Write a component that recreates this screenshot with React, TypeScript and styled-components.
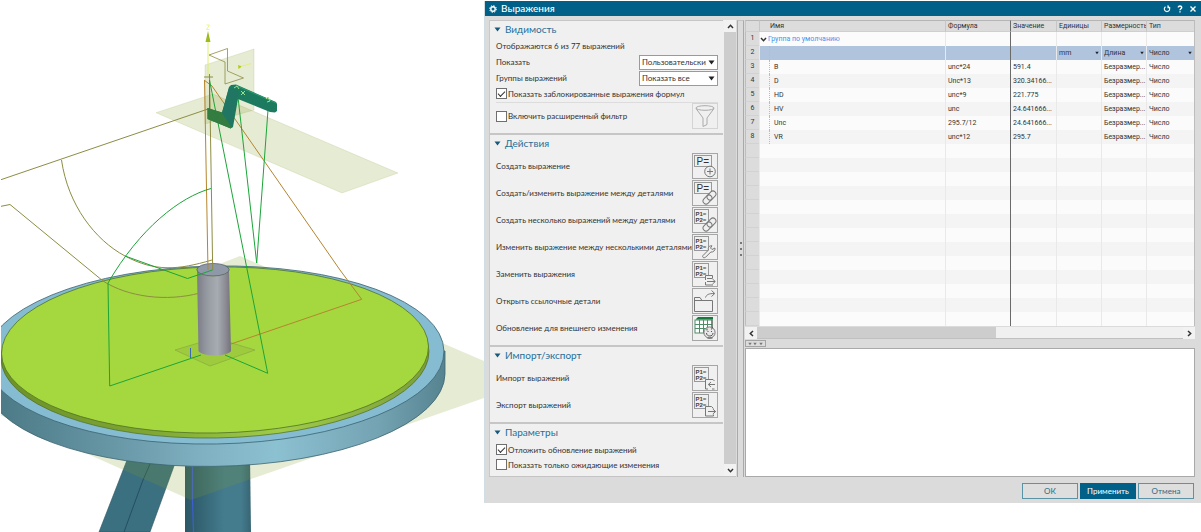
import React from "react";
import styled, { createGlobalStyle, css } from "styled-components";

const uiFont = `Lato, "Noto Sans", sans-serif`;
const tableFont = `Roboto, "Noto Sans", sans-serif`;

const GlobalStyle = createGlobalStyle`
  *, *::before, *::after { box-sizing: border-box; }
  body { margin: 0; background: #fff; font-family: ${uiFont}; font-size: 8px; color: #333; }
  button, input, select, textarea { font: inherit; color: inherit; margin: 0; border-radius: 0; }
`;

const Page = styled.main`
  display: grid;
  grid-template-columns: minmax(0, 484fr) minmax(0, 717fr);
  align-items: start;
`;

const SceneSvg = styled.svg`
  display: block;
  width: 100%;
  height: auto;
`;

const Dialog = styled.section`
  margin-top: 1px;
  background: #dbdbdb;
  border-left: 1px solid #d0dde2;
`;

const TitleBar = styled.header`
  display: flex;
  align-items: center;
  height: 15px;
  padding: 0 4px;
  gap: 4px;
  background: #006087;
  color: #fff;
`;

const Title = styled.h1`
  flex: 1;
  margin: 0;
  font-size: 10px;
  line-height: 15px;
  font-weight: 500;
`;

const TitleButton = styled.button`
  width: 9px;
  height: 9px;
  padding: 0;
  border: 0;
  background: none;
  display: grid;
  place-items: center;
`;

const TitleActions = styled.div`
  display: flex;
  gap: 4px;
`;

const Body = styled.div`
  display: grid;
  grid-template-columns: 247px 9px minmax(0, 1fr);
  padding: 4px 6px 0 4px;
`;

const Side = styled.div`
  display: flex;
  min-width: 0;
  border-bottom: 1px solid #c4c4c4;
`;

const Sections = styled.div`
  flex: 1;
  min-width: 0;
  border-left: 1px solid #c9c9c9;
  background: #f0f0f0;
`;

const Section = styled.section`
  padding: 0 5px 4px 6px;
  border-top: 1px solid #c6c6c6;
  & + & { border-top-width: 2px; }
`;

const SectionTitle = styled.h2`
  display: flex;
  align-items: center;
  gap: 4px;
  height: 16px;
  margin: 0 0 2px -2px;
  font-size: 10px;
  line-height: 16px;
  font-weight: 400;
  color: #1f6f97;
`;

const Note = styled.p`
  margin: 0;
  height: 15px;
  line-height: 15px;
`;

const Field = styled.div`
  display: flex;
  align-items: center;
  justify-content: space-between;
  height: 16px;
`;

const SelectBox = styled.div`
  display: grid;
  width: 79px;
  height: 15px;
  align-items: center;
  border: 1px solid #9a9a9a;
  background: #fff;
  & > * { grid-area: 1 / 1; }
  & > svg { justify-self: end; margin-right: 2px; pointer-events: none; }
`;

const Select = styled.select`
  appearance: none;
  width: 100%;
  height: 13px;
  padding: 0 2px;
  border: 0;
  background: transparent;
  line-height: 13px;
`;

const CheckLabel = styled.label`
  display: flex;
  align-items: center;
  gap: 1px;
  height: 15px;
  white-space: nowrap;
`;

const Tick = styled.input`
  appearance: none;
  display: grid;
  place-items: center;
  width: 11px;
  height: 11px;
  border: 1px solid #6f6f6f;
  background: #fff;
  &:checked::after {
    content: "";
    width: 7px;
    height: 4px;
    margin-top: -2px;
    border-left: 1px solid #333;
    border-bottom: 1px solid #333;
    transform: rotate(-45deg);
  }
`;

const FilterRow = styled.div`
  display: flex;
  align-items: center;
  justify-content: space-between;
  margin-top: 1px;
  border-top: 1px solid #dcdcdc;
`;

const ActionList = styled.div`
  display: grid;
  grid-template-columns: minmax(0, 1fr);
  gap: 1px;
`;

const Action = styled.div`
  display: flex;
  align-items: center;
  justify-content: space-between;
  white-space: nowrap;
  & > span { min-width: 0; }
`;

const IconButton = styled.button<{ $dim?: boolean }>`
  width: 26px;
  height: 26px;
  flex: none;
  padding: 0;
  border: 1px solid ${(p) => (p.$dim ? "#d4d4d4" : "#a6a6a6")};
  background: #f0f0f0;
  svg { display: block; }
`;

const VScroll = styled.div`
  display: flex;
  flex-direction: column;
  flex: none;
  width: 13px;
  background: #f0f0f0;
  padding-left: 1px;
`;

const ScrollButton = styled.button`
  width: 12px;
  height: 12px;
  flex: none;
  padding: 0;
  border: 0;
  background: #f2f2f2;
  display: grid;
  place-items: center;
`;

const VThumb = styled.div`
  flex: 1;
  background: #cdcdcd;
`;

const Splitter = styled.div`
  display: flex;
  flex-direction: column;
  align-items: center;
  justify-content: center;
  gap: 4px;
  margin: 0 1px;
  border: 1px solid #a9a9a9;
  border-bottom: 0;
  border-top-color: #c4c4c4;
`;

const Dot = styled.i`
  width: 2px;
  height: 2px;
  background: #777;
`;

const Main = styled.div`
  display: flex;
  flex-direction: column;
  min-width: 0;
`;

const Grid = styled.table`
  width: 100%;
  table-layout: fixed;
  border-collapse: separate;
  border-spacing: 0;
  background: #fcfcfc;
  font-family: ${tableFont};
  font-size: 7px;
  line-height: 15px;
  border-right: 1px solid #bdbdbd;
`;

const cell = css`
  height: 14px;
  padding: 0 0 0 2px;
  overflow: hidden;
  white-space: nowrap;
  text-align: left;
  font-weight: 400;
`;

const HeadCell = styled.th<{ $mark?: boolean; $first?: boolean }>`
  ${cell}
  height: 12px;
  line-height: 10px;
  background: #dcdcdc;
  border-top: 1px solid #b5b5b5;
  border-bottom: 1px solid #cfcfcf;
  border-left: 1px solid ${(p) => (p.$mark ? "#6a6a6a" : "#c6c6c6")};
  ${(p) => p.$first && "padding-left: 10px;"}
`;

const NumCell = styled.th`
  ${cell}
  padding: 0;
  line-height: 13px;
  text-align: center;
  background: #dcdcdc;
  border-bottom: 1px solid #d2d2d2;
  border-left: 1px solid #bdbdbd;
`;

const Cell = styled.td<{ $mark?: boolean }>`
  ${cell}
  line-height: 14px;
  border-left: 1px solid ${(p) => (p.$mark ? "#6a6a6a" : "#e9e9e9")};
`;

const NameCell = styled(Cell)<{ $indent: boolean }>`
  padding: 0 0 0 ${(p) => (p.$indent ? 9 : 0)}px;
`;

const Branch = styled.span`
  display: block;
  height: 14px;
  padding-left: 4px;
  border-left: 1px dotted #bbb;
`;

const GroupName = styled.span`
  display: flex;
  align-items: center;
  gap: 1px;
  color: #3f97ea;
`;

const Row = styled.tr<{ $tone: "plain" | "alt" | "active" }>`
  background: ${(p) => ({ plain: "#fbfbfb", alt: "#f4f4f4", active: "#b0c4de" })[p.$tone]};
`;

const CellSelect = styled.div`
  display: grid;
  align-items: center;
  & > * { grid-area: 1 / 1; }
  & > select { padding: 0; }
  & > svg { justify-self: end; margin-right: 2px; pointer-events: none; }
`;

const HScroll = styled.div`
  display: flex;
  height: 12px;
  margin-top: 1px;
  background: #f0f0f0;
  border-bottom: 1px solid #c0c0c0;
`;

const HTrack = styled.div`
  flex: 1;
`;

const HThumb = styled.div`
  width: 56%;
  height: 100%;
  background: #cdcdcd;
`;

const CollapseButton = styled.button`
  display: flex;
  align-items: center;
  justify-content: space-around;
  width: 21px;
  height: 7px;
  margin: 1px 0;
  padding: 0 1px;
  border: 1px solid #a3a3a3;
  background: #dcdcdc;
`;

const Comment = styled.textarea`
  flex: 1;
  display: block;
  width: 100%;
  padding: 2px;
  border: 1px solid #a9a9a9;
  background: #fff;
  resize: none;
  outline: none;
`;

const Footer = styled.footer`
  display: flex;
  justify-content: flex-end;
  gap: 2px;
  padding: 6px 7px 4px;
`;

const FootButton = styled.button<{ $primary?: boolean }>`
  width: 56px;
  height: 16px;
  padding: 0;
  border: 1px solid ${(p) => (p.$primary ? "#006087" : "#5b93a6")};
  background: ${(p) => (p.$primary ? "#006087" : "#dedede")};
  color: ${(p) => (p.$primary ? "#fff" : "#2a6a84")};
  line-height: 14px;
`;

const DownArrow = ({ size = 7, color = "#222" }: { size?: number; color?: string }) => (
  <svg width={size} height={size} viewBox="0 0 7 7" aria-hidden="true">
    <path d="M0.5 1.5h6L3.5 5.5z" fill={color} />
  </svg>
);

const Chevron = ({ turn }: { turn: number }) => (
  <svg width="7" height="7" viewBox="0 0 7 7" aria-hidden="true">
    <path d="M1 5L3.5 2.3L6 5" fill="none" stroke="#333" strokeWidth="1.5" transform={`rotate(${turn} 3.5 3.5)`} />
  </svg>
);

type IconName = "create" | "link" | "multiLink" | "wrench" | "replace" | "folder" | "refresh" | "import" | "export" | "filter";

const SinglePlate = () => (
  <g>
    <rect x="1.5" y="1.5" width="17" height="11" fill="#f0f0f0" stroke="#999" />
    <text x="3.5" y="10.5" fontSize="10" fontFamily="Liberation Sans" fill="#333">P=</text>
  </g>
);

const DoublePlate = () => (
  <g>
    <rect x="1.5" y="1.5" width="14" height="14" fill="#f0f0f0" stroke="#999" />
    <text x="2.5" y="7.5" fontSize="6" fontWeight="700" fontFamily="Liberation Sans" fill="#444">P1=</text>
    <text x="2.5" y="13.5" fontSize="6" fontWeight="700" fontFamily="Liberation Sans" fill="#444">P2=</text>
  </g>
);

const Links = () => (
  <g fill="none" stroke="#777" strokeWidth="1">
    <rect x="-5" y="-3" width="10" height="6" rx="3" fill="#f0f0f0" transform="translate(18.500 14.500) rotate(-45)" />
    <rect x="-5" y="-3" width="10" height="6" rx="3" transform="translate(14.500 18.500) rotate(-45)" />
  </g>
);

const line = { fill: "#f0f0f0", stroke: "#777", strokeWidth: 1 };

const glyphs: Record<IconName, React.ReactNode> = {
  create: (
    <>
      <SinglePlate />
      <circle cx="17" cy="17.500" r="5.300" {...line} />
      <path d="M14 17.500h6M17 14.500v6" {...line} />
    </>
  ),
  link: (<><SinglePlate /><Links /></>),
  multiLink: (<><DoublePlate /><Links /></>),
  wrench: (
    <>
      <DoublePlate />
      <path d="M10 20.500L15.500 15C14.500 12.500 16.500 10.500 19 10.800L17.500 13L19 14.500L22 13C22.500 15.500 20 17.500 17.800 17L12.500 22.300C10.500 23.500 8.800 22 10 20.500Z" {...line} />
    </>
  ),
  replace: (
    <>
      <DoublePlate />
      <path d="M19.500 16V13.500H12.500V18M12.500 20V23H20M14 16.500H19.500M14 19.500H22M19.500 17L22.300 19.500L19.500 22" {...line} />
    </>
  ),
  folder: (
    <>
      <path d="M1.500 22.500V8.500H7L9 11.500H19.500V22.500Z" {...line} />
      <path d="M1.500 11.500H9M12.500 8.500C13.500 5.500 16 4.500 21 4.500M18.500 1.500L21.800 4.500L18.500 7.500" {...line} fill="none" />
    </>
  ),
  refresh: (
    <>
      <rect x="2" y="4" width="17" height="13" fill="#fff" stroke="#4f8c68" />
      <path d="M2 8.500h17M2 12.500h17M6.500 4v13M10.500 4v13M14.500 4v13" stroke="#4f8c68" />
      <path d="M3 3L5 1H20V3.500H3Z" fill="#167a3f" />
      <path d="M19 3.500V14" stroke="#555" />
      <circle cx="16.500" cy="16.500" r="5.600" {...line} fill="#e8e8e8" />
      <path d="M13.500 17C13.500 21 20 21 20 17M14 14.500V12.500M18.500 13.500L19.500 11M14.500 15.500h1M18 15.500h1M14.500 22h5" stroke="#555" fill="none" />
    </>
  ),
  import: (
    <>
      <DoublePlate />
      <path d="M12.500 23V13.500H20L21.500 15M12.500 23H15M19 23H21.500M22 18.500H15.500M18 16L15.300 18.500L18 21" {...line} />
    </>
  ),
  export: (
    <>
      <DoublePlate />
      <path d="M20.500 15.500L18.500 13.500H12.500V23H20.500V21.500M15 18.500H22.500M19.800 16L22.600 18.500L19.800 21" {...line} />
    </>
  ),
  filter: (
    <g fill="none" stroke="#aaa">
      <ellipse cx="12" cy="4" rx="9" ry="2.300" />
      <path d="M3 4.500L10 14V22.500L14 20.500V14L21 4.500" />
    </g>
  ),
};

const ToolIcon = ({ name }: { name: IconName }) => (
  <svg width="24" height="24" viewBox="0 0 24 24" aria-hidden="true">{glyphs[name]}</svg>
);

const actions: [string, IconName][] = [
  ["Создать выражение", "create"],
  ["Создать/изменить выражение между деталями", "link"],
  ["Создать несколько выражений между деталями", "multiLink"],
  ["Изменить выражение между несколькими деталями", "wrench"],
  ["Заменить выражения", "replace"],
  ["Открыть ссылочные детали", "folder"],
  ["Обновление для внешнего изменения", "refresh"],
];

const exchange: [string, IconName][] = [
  ["Импорт выражений", "import"],
  ["Экспорт выражений", "export"],
];

const expressions = [
  ["B", "unc*24", "591.4"],
  ["D", "Unc*13", "320.34166..."],
  ["HD", "unc*9", "221.775"],
  ["HV", "unc", "24.641666..."],
  ["Unc", "295.7/12", "24.641666..."],
  ["VR", "unc*12", "295.7"],
];

const emptyRows = Array.from({ length: 13 }, (_, i) => i);

const Actions = ({ items }: { items: [string, IconName][] }) => (
  <ActionList>
    {items.map(([label, icon]) => (
      <Action key={label}>
        <span>{label}</span>
        <IconButton type="button" aria-label={label}><ToolIcon name={icon} /></IconButton>
      </Action>
    ))}
  </ActionList>
);

const Heading = ({ children }: { children: React.ReactNode }) => (
  <SectionTitle><DownArrow color="#165a7c" />{children}</SectionTitle>
);

const RowSelect = ({ value, label }: { value: string; label: string }) => (
  <CellSelect>
    <Select aria-label={label}><option>{value}</option></Select>
    <DownArrow size={4} />
  </CellSelect>
);

function Scene() {
  return (
    <SceneSvg viewBox="0 0 484 532" role="img" aria-label="3D-модель">
      <defs>
        <linearGradient id="rim" x1="0" x2="445" y1="0" y2="0" gradientUnits="userSpaceOnUse">
          <stop offset="0" stopColor="#4c7a86" />
          <stop offset="0.25" stopColor="#6796a5" />
          <stop offset="0.45" stopColor="#7fb0c1" />
          <stop offset="0.62" stopColor="#8cc1d2" />
          <stop offset="0.85" stopColor="#74a3b3" />
          <stop offset="1" stopColor="#568390" />
        </linearGradient>
        <linearGradient id="edge" x1="0" x2="1" y1="0" y2="0">
          <stop offset="0" stopColor="#6c9128" />
          <stop offset="0.35" stopColor="#7fa733" />
          <stop offset="0.65" stopColor="#a0cc49" />
          <stop offset="1" stopColor="#7c9d3a" />
        </linearGradient>
        <linearGradient id="post" x1="0" x2="1" y1="0" y2="0">
          <stop offset="0" stopColor="#7b7c86" />
          <stop offset="0.3" stopColor="#969ba2" />
          <stop offset="0.6" stopColor="#a6acb1" />
          <stop offset="0.85" stopColor="#8b8a93" />
          <stop offset="1" stopColor="#73717c" />
        </linearGradient>
        <linearGradient id="column" x1="0" x2="1" y1="0" y2="0">
          <stop offset="0" stopColor="#2d5767" />
          <stop offset="0.25" stopColor="#356575" />
          <stop offset="0.6" stopColor="#447c8e" />
          <stop offset="0.85" stopColor="#447c8e" />
          <stop offset="1" stopColor="#376573" />
        </linearGradient>
      </defs>

      <path d="M129 455L99 532H150L178 455Z" fill="#3b7080" stroke="#2e5663" strokeWidth="0.600" />
      <path d="M150 455V464L143 480L124 532" fill="none" stroke="#24505f" />
      <path d="M185 455V532H251L250 455Z" fill="url(#column)" />
      <path d="M192.500 455V500L193.500 532" stroke="#3d5fd0" fill="none" strokeWidth="1.200" />
      <path d="M240 256L484 361V398L191 500L0 415V350Z" fill="#829b28" fillOpacity="0.200" />

      <path d="M-15 359V380A229 89 -1 0 0 445 374V351Z" fill="url(#rim)" stroke="#3c6470" strokeWidth="0.800" />
      <ellipse cx="215" cy="355" rx="229" ry="89" transform="rotate(-1 215 355)" fill="#86bcd1" stroke="#3c6470" strokeWidth="0.800" />
      <ellipse cx="215" cy="355" rx="214" ry="83" transform="rotate(-1 215 355)" fill="url(#edge)" stroke="#4c6b22" strokeWidth="0.700" />
      <ellipse cx="215" cy="350" rx="213.500" ry="83" transform="rotate(-1 215 350)" fill="#a5d73f" stroke="#4f7326" strokeWidth="0.800" />

      <path d="M175 350L215 338L255 350L210 366Z" fill="#8fb53a" fillOpacity="0.350" stroke="#8cae40" strokeWidth="0.800" />
      <path d="M190.500 348V358" stroke="#3b67b8" />

      <g fill="#829b28" fillOpacity="0.200" stroke="#829b28" strokeOpacity="0.250" strokeWidth="0.600">
        <path d="M205 65L254 49V110L205 124Z" />
        <path d="M156 112.700L213 94L398 173L342 193Z" />
      </g>

      <path d="M197 270A16 6.300 0 0 0 229 270L231 351A16.500 5.500 0 0 1 198.500 351Z" fill="url(#post)" />
      <ellipse cx="213" cy="269.700" rx="16.200" ry="6.300" fill="#8f98a6" stroke="#4d5560" strokeWidth="0.700" />

      <g fill="none" stroke="#8d8d42" strokeWidth="1">
        <path d="M0 180L208 109" />
        <path d="M61.500 160C68 205 95 240 125 256S178 270 212 260" />
        <path d="M0 206.500L10 204.500L103 281C128 297 166 302 200 293" />
        <path d="M209 55L227.500 48.500V71L243.500 78L225 84V62Z" strokeWidth="0.800" />
        <path d="M209.500 74L212.700 270M204 77H213" />
      </g>
      <g fill="none" stroke="#b5852e" strokeWidth="1">
        <path d="M204.500 80L208 270M204 80L212 86L340 270L361.700 299.300L231 344" />
      </g>
      <g fill="none" stroke="#1ba538" strokeWidth="1">
        <path d="M211 188.500C180 197 140 228 108 283L109.700 386L201 355" />
        <path d="M125 256L187.500 278.500L212.500 270" />
        <path d="M209.500 80L267.700 373.300L225 355" />
        <path d="M238 97L256.700 263L268 110" />
        <path d="M209.500 80V115" />
      </g>

      <path d="M207.500 108L222 112.500L229 87L231 85L236 84.500L276 102L277 104V111L275 112.500L270 112L238 99L233 127L230.500 128.500L207.500 119Z" fill="#1c7a5e" />
      <path d="M207.500 108L222 112.500L232 112L231 128.500L207.500 119Z" fill="#327d3f" />
      <path d="M229 88L238 91L232 128L222 113Z" fill="#217663" />
      <path d="M236 85.500L276 103" stroke="#2a9c70" fill="none" />
      <g fill="none" stroke="#9be08a" strokeWidth="1">
        <path d="M234 88L237 86L239 89M241 91L245 95M245 91L241 95M266 99L268 97L270 101L267 102" />
      </g>
      <path d="M208 40V76" stroke="#dff06a" />
      <path d="M208 31L205.500 42H210.500Z" fill="#9cbb1c" />
      <path d="M206.500 25H209.500L206.500 29.500H209.500" fill="none" stroke="#eef58a" />
      <path d="M238 65L242 66.500L238.500 69Z" fill="#b8c91c" />
      <path d="M241 66.500L251 63.500" stroke="#e6ee7c" />
      <rect width="1" height="532" fill="#fff" />
    </SceneSvg>
  );
}

export default function App() {
  return (
    <>
      <GlobalStyle />
      <Page>
        <Scene />
        <Dialog aria-label="Выражения">
          <TitleBar>
            <svg width="8" height="8" viewBox="0 0 8 8" aria-hidden="true">
              <circle cx="4" cy="4" r="2.200" fill="none" stroke="#fff" strokeWidth="1.400" />
              <circle cx="4" cy="4" r="3.400" fill="none" stroke="#fff" strokeWidth="1" strokeDasharray="1.300 1.370" />
            </svg>
            <Title>Выражения</Title>
            <TitleActions>
              <TitleButton type="button" aria-label="Сброс">
                <svg width="8" height="8" viewBox="0 0 8 8"><path d="M2.500 1.700A2.700 2.700 0 1 0 5.500 1.700M5 0.300V2.800H7.300" fill="none" stroke="#fff" strokeWidth="1.100" /></svg>
              </TitleButton>
              <TitleButton type="button" aria-label="Справка">
                <svg width="8" height="8" viewBox="0 0 8 8"><path d="M2.300 2.500C2.300 0.500 5.700 0.500 5.700 2.500C5.700 3.700 4 3.700 4 5.200M4 6.200V7.500" fill="none" stroke="#fff" strokeWidth="1.400" /></svg>
              </TitleButton>
              <TitleButton type="button" aria-label="Закрыть">
                <svg width="8" height="8" viewBox="0 0 8 8"><path d="M1.500 1.500L6.500 6.500M6.500 1.500L1.500 6.500" stroke="#fff" strokeWidth="1.400" /></svg>
              </TitleButton>
            </TitleActions>
          </TitleBar>

          <Body>
            <Side>
              <Sections>
                <Section>
                  <Heading>Видимость</Heading>
                  <Note>Отображаются 6 из 77 выражений</Note>
                  <Field>
                    <label htmlFor="show">Показать</label>
                    <SelectBox>
                      <Select id="show"><option>Пользовательски</option></Select>
                      <DownArrow />
                    </SelectBox>
                  </Field>
                  <Field>
                    <label htmlFor="groups">Группы выражений</label>
                    <SelectBox>
                      <Select id="groups"><option>Показать все</option></Select>
                      <DownArrow />
                    </SelectBox>
                  </Field>
                  <CheckLabel><Tick type="checkbox" defaultChecked />Показать заблокированные выражения формул</CheckLabel>
                  <FilterRow>
                    <CheckLabel><Tick type="checkbox" />Включить расширенный фильтр</CheckLabel>
                    <IconButton type="button" $dim aria-label="Фильтр"><ToolIcon name="filter" /></IconButton>
                  </FilterRow>
                </Section>
                <Section>
                  <Heading>Действия</Heading>
                  <Actions items={actions} />
                </Section>
                <Section>
                  <Heading>Импорт/экспорт</Heading>
                  <Actions items={exchange} />
                </Section>
                <Section>
                  <Heading>Параметры</Heading>
                  <CheckLabel><Tick type="checkbox" defaultChecked />Отложить обновление выражений</CheckLabel>
                  <CheckLabel><Tick type="checkbox" />Показать только ожидающие изменения</CheckLabel>
                </Section>
              </Sections>
              <VScroll>
                <ScrollButton type="button" aria-label="Вверх"><Chevron turn={0} /></ScrollButton>
                <VThumb />
                <ScrollButton type="button" aria-label="Вниз"><Chevron turn={180} /></ScrollButton>
              </VScroll>
            </Side>

            <Splitter><Dot /><Dot /><Dot /></Splitter>

            <Main>
              <Grid>
                <colgroup>
                  <col style={{ width: 14 }} />
                  <col />
                  <col style={{ width: 65 }} />
                  <col style={{ width: 46 }} />
                  <col style={{ width: 45 }} />
                  <col style={{ width: 45 }} />
                  <col style={{ width: 48 }} />
                </colgroup>
                <thead>
                  <tr>
                    <HeadCell aria-label="№" />
                    <HeadCell $first>Имя</HeadCell>
                    <HeadCell>Формула</HeadCell>
                    <HeadCell $mark>Значение</HeadCell>
                    <HeadCell>Единицы</HeadCell>
                    <HeadCell>Размерность</HeadCell>
                    <HeadCell>Тип</HeadCell>
                  </tr>
                </thead>
                <tbody>
                  <Row $tone="plain">
                    <NumCell>1</NumCell>
                    <NameCell $indent={false}><GroupName><Chevron turn={180} />Группа по умолчанию</GroupName></NameCell>
                    <Cell /><Cell $mark /><Cell /><Cell /><Cell />
                  </Row>
                  <Row $tone="active">
                    <NumCell>2</NumCell>
                    <NameCell $indent><Branch /></NameCell>
                    <Cell /><Cell $mark />
                    <Cell><RowSelect label="Единицы" value="mm" /></Cell>
                    <Cell><RowSelect label="Размерность" value="Длина" /></Cell>
                    <Cell><RowSelect label="Тип" value="Число" /></Cell>
                  </Row>
                  {expressions.map(([name, formula, value], i) => (
                    <Row key={name} $tone={i % 2 ? "alt" : "plain"}>
                      <NumCell>{i + 3}</NumCell>
                      <NameCell $indent><Branch>{name}</Branch></NameCell>
                      <Cell>{formula}</Cell>
                      <Cell $mark>{value}</Cell>
                      <Cell />
                      <Cell>Безразмер...</Cell>
                      <Cell>Число</Cell>
                    </Row>
                  ))}
                  {emptyRows.map((i) => (
                    <Row key={i} $tone={i % 2 ? "alt" : "plain"}>
                      <NumCell /><Cell /><Cell /><Cell $mark /><Cell /><Cell /><Cell />
                    </Row>
                  ))}
                </tbody>
              </Grid>
              <HScroll>
                <ScrollButton type="button" aria-label="Влево"><Chevron turn={-90} /></ScrollButton>
                <HTrack><HThumb /></HTrack>
                <ScrollButton type="button" aria-label="Вправо"><Chevron turn={90} /></ScrollButton>
              </HScroll>
              <CollapseButton type="button" aria-label="Свернуть">
                <DownArrow size={4} color="#777" /><DownArrow size={4} color="#777" /><DownArrow size={4} color="#777" />
              </CollapseButton>
              <Comment aria-label="Сообщения" />
            </Main>
          </Body>

          <Footer>
            <FootButton type="button">ОК</FootButton>
            <FootButton type="button" $primary>Применить</FootButton>
            <FootButton type="button">Отмена</FootButton>
          </Footer>
        </Dialog>
      </Page>
    </>
  );
}
